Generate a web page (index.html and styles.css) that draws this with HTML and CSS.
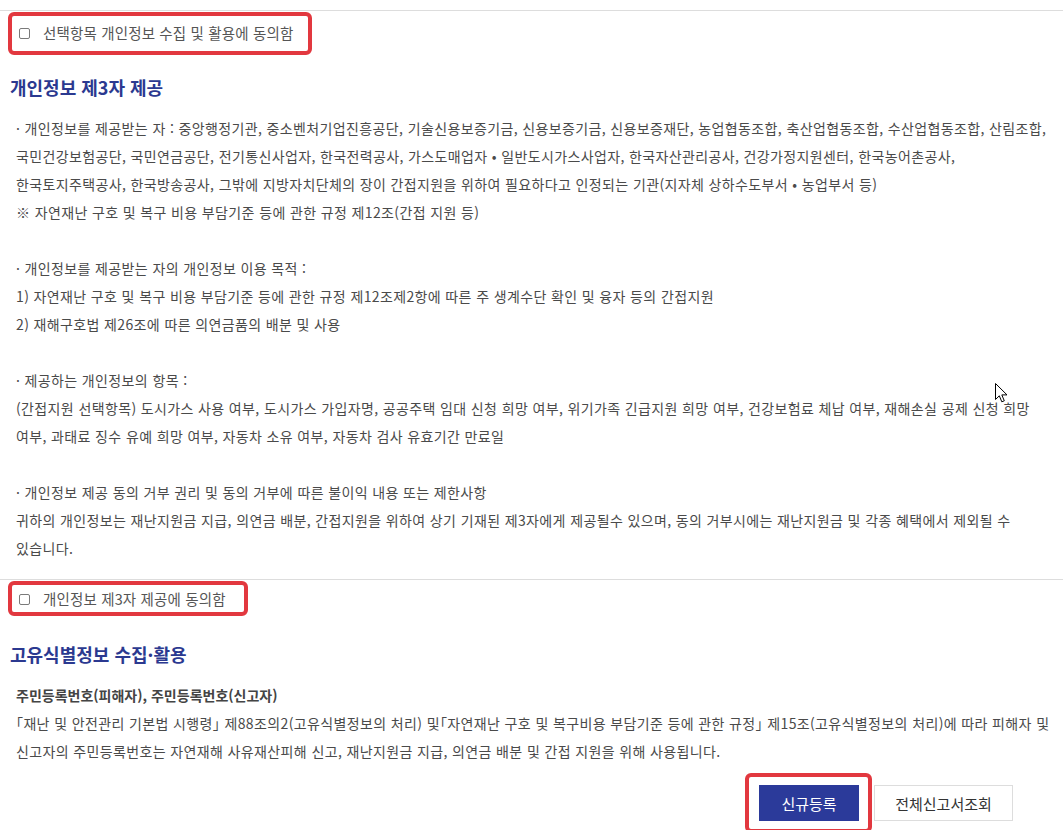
FILE: index.html
```html
<!DOCTYPE html>
<html lang="ko">
<head>
  <meta charset="UTF-8">
  <meta name="viewport" content="width=device-width, initial-scale=1.0">
  <title>개인정보 동의</title>
  <link rel="stylesheet" href="styles.css">
</head>
<body>
  <div class="wrap">
    <div class="agree-row agree-row--first">
      <label class="agree agree--first">
        <input type="checkbox" class="agree-check">
        <span>선택항목 개인정보 수집 및 활용에 동의함</span>
      </label>
    </div>

    <section class="terms terms--first">
      <h2 class="terms-title">개인정보 제3자 제공</h2>
      <div class="terms-body">
        <p>· 개인정보를 제공받는 자 : 중앙행정기관, 중소벤처기업진흥공단, 기술신용보증기금, 신용보증기금, 신용보증재단, 농업협동조합, 축산업협동조합, 수산업협동조합, 산림조합,<br>
        국민건강보험공단, 국민연금공단, 전기통신사업자, 한국전력공사, 가스도매업자 • 일반도시가스사업자, 한국자산관리공사, 건강가정지원센터, 한국농어촌공사,<br>
        한국토지주택공사, 한국방송공사, 그밖에 지방자치단체의 장이 간접지원을 위하여 필요하다고 인정되는 기관(지자체 상하수도부서 • 농업부서 등)<br>
        ※ 자연재난 구호 및 복구 비용 부담기준 등에 관한 규정 제12조(간접 지원 등)</p>
        <p>· 개인정보를 제공받는 자의 개인정보 이용 목적 :<br>
        1) 자연재난 구호 및 복구 비용 부담기준 등에 관한 규정 제12조제2항에 따른 주 생계수단 확인 및 융자 등의 간접지원<br>
        2) 재해구호법 제26조에 따른 의연금품의 배분 및 사용</p>
        <p>· 제공하는 개인정보의 항목 :<br>
        (간접지원 선택항목) 도시가스 사용 여부, 도시가스 가입자명, 공공주택 임대 신청 희망 여부, 위기가족 긴급지원 희망 여부, 건강보험료 체납 여부, 재해손실 공제 신청 희망<br>
        여부, 과태료 징수 유예 희망 여부, 자동차 소유 여부, 자동차 검사 유효기간 만료일</p>
        <p>· 개인정보 제공 동의 거부 권리 및 동의 거부에 따른 불이익 내용 또는 제한사항<br>
        귀하의 개인정보는 재난지원금 지급, 의연금 배분, 간접지원을 위하여 상기 기재된 제3자에게 제공될수 있으며, 동의 거부시에는 재난지원금 및 각종 혜택에서 제외될 수<br>
        있습니다.</p>
      </div>
    </section>

    <div class="agree-row agree-row--second">
      <label class="agree agree--second">
        <input type="checkbox" class="agree-check">
        <span>개인정보 제3자 제공에 동의함</span>
      </label>
    </div>

    <section class="terms terms--second">
      <h2 class="terms-title">고유식별정보 수집·활용</h2>
      <div class="terms-body">
        <p class="terms-strong">주민등록번호(피해자), 주민등록번호(신고자)</p>
        <p><span class="bracket">「</span>재난 및 안전관리 기본법 시행령<span class="bracket">」</span> 제88조의2(고유식별정보의 처리) 및<span class="bracket">「</span>자연재난 구호 및 복구비용 부담기준 등에 관한 규정<span class="bracket">」</span> 제15조(고유식별정보의 처리)에 따라 피해자 및<br>
        신고자의 주민등록번호는 자연재해 사유재산피해 신고, 재난지원금 지급, 의연금 배분 및 간접 지원을 위해 사용됩니다.</p>
      </div>
    </section>

    <div class="btns">
      <span class="btn-mark">
        <button type="button" class="btn btn-primary">신규등록</button>
      </span>
      <button type="button" class="btn btn-line">전체신고서조회</button>
    </div>
  </div>

  <!-- mouse pointer in the capture -->
  <svg class="pointer" width="13" height="20" viewBox="0 0 13 20">
    <path d="M0.5 0.5 L0.5 16.5 L4.3 12.8 L6.8 18.8 L9.3 17.8 L6.8 11.9 L12 11.9 Z" fill="#fff" stroke="#000" stroke-width="1"/>
  </svg>
</body>
</html>
```

FILE: styles.css
```css
body {
  font-family: "Noto Sans CJK KR", "Noto Sans", sans-serif;
  margin: 0;
  padding: 0;
  background-color: #fff;
  color: #4a4a4a;
  font-size: 14px;
  letter-spacing: 0.37px;
}
.wrap {
  padding-top: 10px;
}
p {
  margin: 0;
}

/* agree rows */
.agree-row {
  border-top: 1px solid #ddd;
}
.agree-row--first {
  padding-top: 1px;
}
.agree-row--second {
  padding-top: 1px;
}
.agree {
  display: inline-flex;
  align-items: center;
  gap: 13px;
  margin-left: 8px;
  border: 4px solid #e2383f;
  border-radius: 6px;
  line-height: 20px;
  font-size: 14.5px;
  letter-spacing: 0.15px;
  color: #555;
}
.agree--first {
  padding: 7px 15px 8px 7px;
}
.agree--second {
  padding: 4px 18px 3px 7px;
}
.agree-check {
  appearance: none;
  -webkit-appearance: none;
  width: 11px;
  height: 11px;
  margin: 0;
  border: 1px solid #7a7a7a;
  border-radius: 2px;
  background: #fff;
}

/* terms */
.terms-title {
  margin: 0;
  padding-left: 10px;
  font-size: 18px;
  line-height: 24px;
  font-weight: 700;
  letter-spacing: 0;
  color: #2b3990;
}
.terms--first {
  padding-top: 20px;
  padding-bottom: 17px;
}
.terms--second {
  padding-top: 26px;
}
.terms-body {
  padding-left: 16px;
  line-height: 28px;
  white-space: nowrap;
}
.terms--first .terms-body {
  padding-top: 15px;
}
.terms--first .terms-body p + p {
  margin-top: 28px;
}
.terms--second .terms-body {
  padding-top: 15px;
}
.terms-strong {
  font-weight: 700;
  letter-spacing: 0;
  color: #444;
}
.bracket {
  font-feature-settings: "halt";
}

/* buttons */
.btns {
  display: flex;
  justify-content: flex-end;
  align-items: flex-start;
  gap: 2px;
  padding: 8px 50px 0 0;
}
.btn-mark {
  display: inline-flex;
  padding: 8px 9px 8px 10px;
  border: 4px solid #e2383f;
  border-radius: 6px;
}
.btn {
  font-family: inherit;
  font-size: 15px;
  letter-spacing: 0;
  height: 36px;
  padding: 0;
  cursor: pointer;
}
.btn-primary {
  width: 100px;
  background: #2b3a9a;
  color: #fff;
  border: none;
}
.btn-line {
  width: 139px;
  margin-top: 12px;
  background: #fff;
  color: #333;
  border: 1px solid #ddd;
}

.pointer {
  position: absolute;
  left: 995px;
  top: 383px;
}
```
